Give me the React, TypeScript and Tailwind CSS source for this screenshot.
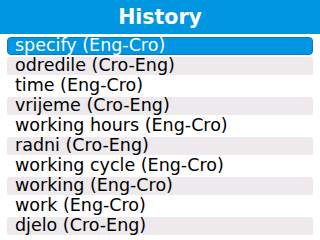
const items = [
  "specify (Eng-Cro)",
  "odredile (Cro-Eng)",
  "time (Eng-Cro)",
  "vrijeme (Cro-Eng)",
  "working hours (Eng-Cro)",
  "radni (Cro-Eng)",
  "working cycle (Eng-Cro)",
  "working (Eng-Cro)",
  "work (Eng-Cro)",
  "djelo (Cro-Eng)",
];

export default function App() {
  return (
    <div className="h-[240px] w-[320px] overflow-hidden bg-white font-['DejaVu_Sans',sans-serif]">
      <div className="flex h-[34px] items-center justify-center bg-[#0096e2]">
        <h1 className="text-[20.5px] font-bold leading-none text-white">History</h1>
      </div>
      <ul className="flex flex-col gap-[2px] px-[7px] pt-[3px]">
        {items.map((item, index) => {
          const selected = index === 0;
          const shaded = index % 2 === 1;
          return (
            <li
              key={item}
              className={
                selected
                  ? "flex h-[18px] items-center rounded-[4px] border border-[#0a7cc4] bg-[#0096e2] pl-[7px] text-[17.5px] leading-none text-white"
                  : shaded
                    ? "flex h-[18px] items-center rounded-[2px] bg-[#ede9ec] pl-[8px] text-[17.5px] leading-none text-black"
                    : "flex h-[18px] items-center pl-[8px] text-[17.5px] leading-none text-black"
              }
            >
              {item}
            </li>
          );
        })}
      </ul>
    </div>
  );
}
